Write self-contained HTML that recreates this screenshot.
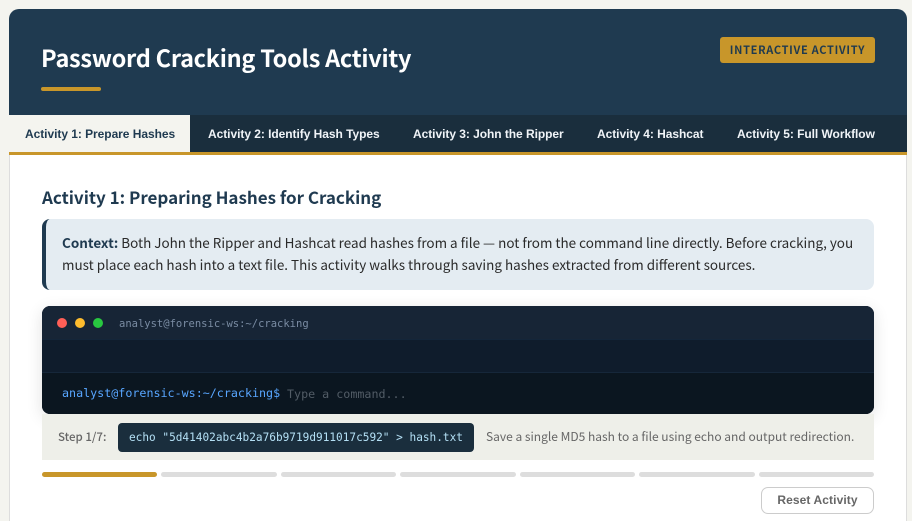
<!DOCTYPE html>
<html><head><meta charset="utf-8"><style>
*{box-sizing:border-box;margin:0;padding:0}
html,body{width:912px;height:521px;overflow:hidden;background:#f4f4ef}
body{position:relative;font-family:"Noto Sans CJK JP","Liberation Sans",sans-serif}
.a{position:absolute;white-space:nowrap}
.tab{position:absolute;top:115px;height:37px;font:bold 12px/38px "Liberation Sans",sans-serif;letter-spacing:-.05px;color:#f0f4f8;white-space:nowrap}
.mono{font-family:"DejaVu Sans Mono","Liberation Mono",monospace}
.seg{position:absolute;top:472px;height:5px;border-radius:3px;background:#ddd}
</style></head><body>
<div class="a" style="left:9px;top:9px;width:898px;height:106px;background:#1f3a50;border-radius:10px 10px 0 0"></div>
<div class="a" style="left:41px;top:39px;font-size:23.5px;font-weight:700;color:#fff;line-height:36px;letter-spacing:-.27px">Password Cracking Tools Activity</div>
<div class="a" style="left:41px;top:87px;width:60px;height:4px;background:#c8962a;border-radius:2px"></div>
<div class="a" style="left:720px;top:37px;width:155px;height:26px;background:#c8962a;border-radius:3px;color:#1f3a50;font-size:11px;font-weight:700;line-height:26px;text-align:center;letter-spacing:.7px">INTERACTIVE ACTIVITY</div>

<div class="a" style="left:9px;top:115px;width:898px;height:37px;background:#1a2e3d"></div>
<div class="a" style="left:9px;top:115px;width:181px;height:37px;background:#f4f4ef"></div>
<div class="tab" style="left:25px;color:#1f3a50">Activity 1: Prepare Hashes</div>
<div class="tab" style="left:208px">Activity 2: Identify Hash Types</div>
<div class="tab" style="left:413px">Activity 3: John the Ripper</div>
<div class="tab" style="left:597px">Activity 4: Hashcat</div>
<div class="tab" style="left:737px">Activity 5: Full Workflow</div>
<div class="a" style="left:9px;top:152px;width:898px;height:3px;background:#c8962a"></div>

<div class="a" style="left:9px;top:155px;width:898px;height:366px;background:#fff;border-left:1px solid #ddd;border-right:1px solid #ddd"></div>

<div class="a" style="left:42px;top:183px;font-size:17px;font-weight:700;color:#1f3a50;line-height:28px;letter-spacing:-.01px">Activity 1: Preparing Hashes for Cracking</div>

<div class="a" style="left:42px;top:219px;width:832px;height:71px;background:#e4ecf2;border-left:4px solid #1f3a50;border-radius:8px"></div>
<div class="a" style="left:62px;top:231px;font-size:13.47px;line-height:22px;color:#2a2a2a"><b style="color:#1f3a50">Context:</b> Both John the Ripper and Hashcat read hashes from a file — not from the command line directly. Before cracking, you<br>must place each hash into a text file. This activity walks through saving hashes extracted from different sources.</div>

<div class="a" style="left:42px;top:306px;width:832px;height:108px;border-radius:8px;overflow:hidden;box-shadow:0 4px 16px rgba(0,0,0,.12);background:#0f1c2c">
  <div class="a" style="left:0;top:0;width:832px;height:34px;background:#172536;border-bottom:1px solid #14263a"></div>
  <div class="a" style="left:15px;top:12px;width:10px;height:10px;border-radius:50%;background:#ff5f57"></div>
  <div class="a" style="left:33px;top:12px;width:10px;height:10px;border-radius:50%;background:#febc2e"></div>
  <div class="a" style="left:51px;top:12px;width:10px;height:10px;border-radius:50%;background:#28c840"></div>
  <div class="a mono" style="left:77px;top:10px;font-size:10.5px;line-height:16px;color:#7a8ca3">analyst@forensic-ws:~/cracking</div>
  <div class="a" style="left:0;top:66px;width:832px;height:42px;background:#0b1620;border-top:1px solid #16273a"></div>
  <div class="a mono" style="left:20px;top:79px;font-size:11.7px;line-height:16px;color:#58a6ff;font-weight:500">analyst@forensic-ws:~/cracking$</div>
  <div class="a mono" style="left:245px;top:80px;font-size:11.7px;line-height:16px;color:#525c66">Type a command...</div>
</div>

<div class="a" style="left:42px;top:414px;width:832px;height:46px;background:#eeefe9"></div>
<div class="a" style="left:58px;top:428px;font-size:11.5px;font-weight:500;line-height:18px;color:#666">Step 1/7:</div>
<div class="a mono" style="left:118px;top:423px;width:356px;height:29px;background:#1a2e3d;border-radius:4px;color:#b4e0f5;font-size:11.1px;line-height:29px;padding-left:11px">echo "5d41402abc4b2a76b9719d911017c592" &gt; hash.txt</div>
<div class="a" style="left:486px;top:428px;font-size:12px;line-height:18px;color:#666">Save a single MD5 hash to a file using echo and output redirection.</div>

<div class="seg" style="left:42px;width:115px;background:#c8962a"></div>
<div class="seg" style="left:161px;width:116px"></div>
<div class="seg" style="left:281px;width:115px"></div>
<div class="seg" style="left:400px;width:116px"></div>
<div class="seg" style="left:520px;width:115px"></div>
<div class="seg" style="left:639px;width:116px"></div>
<div class="seg" style="left:759px;width:115px"></div>

<div class="a" style="left:761px;top:487px;width:113px;height:27px;border:1px solid #ccc;border-radius:7px;background:#fff;color:#666;font:bold 12px/25px 'Liberation Sans',sans-serif;letter-spacing:.1px;text-align:center">Reset Activity</div>
</body></html>
